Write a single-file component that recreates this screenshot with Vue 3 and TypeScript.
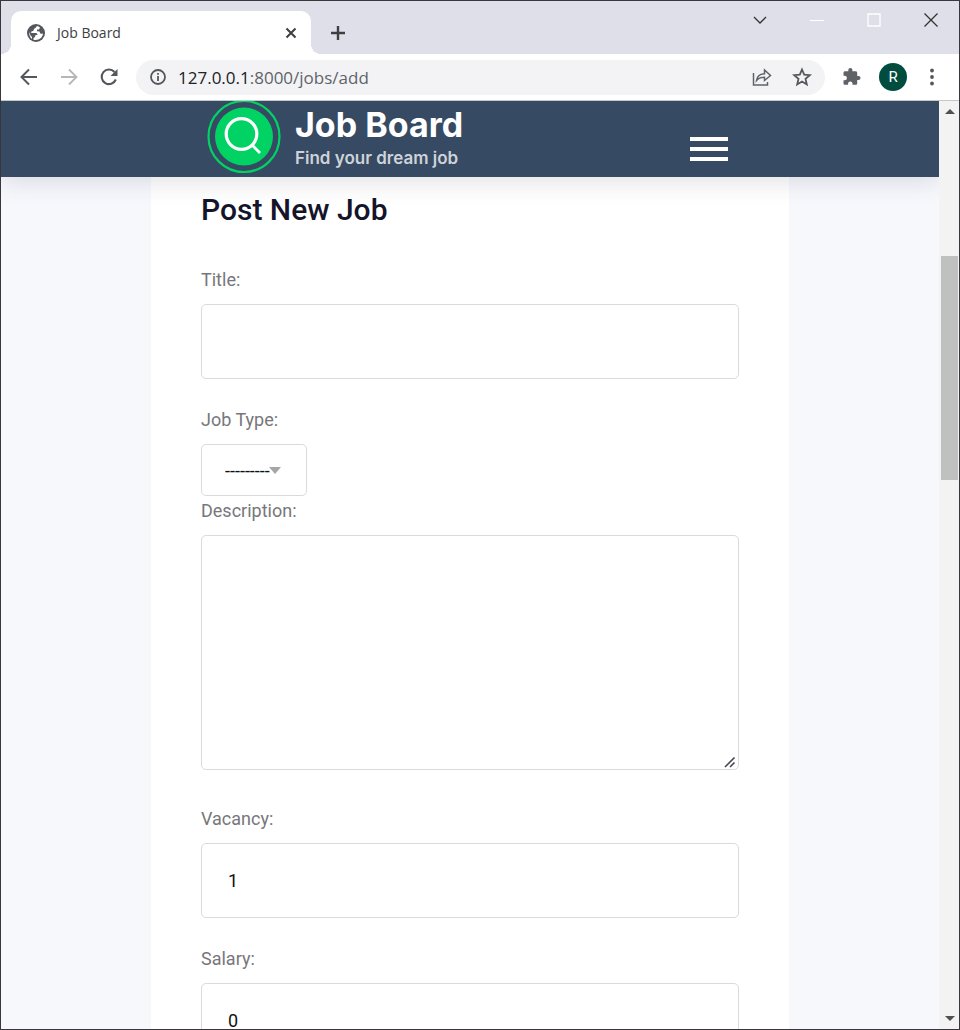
<script setup lang="ts">
import { ref } from 'vue'

const address = ref('127.0.0.1:8000/jobs/add')
const [host, path] = [address.value.split(':')[0], ':' + address.value.split(':')[1]]
const title = ref('')
const jobType = ref('')
const description = ref('')
const vacancy = ref('1')
const salary = ref('0')
</script>

<template>
  <div class="window">
    <div class="tabstrip">
      <div class="tab">
        <svg class="globe" viewBox="0 0 18 18" width="18" height="18">
          <circle cx="9" cy="9" r="9" fill="#54585d" />
          <path d="M10 2c-1 1-1 2-2.500 2.500C6.500 5 7 6.500 6 7c-1 .500-2 .500-2.500 1.500L5.500 9H9c1 0 1.500 1 1.500 2H8.500l-.500 2-1.500 1v1.800C12 17 16 13 16 9.500c-1 .500-2 .500-2.800-.300L12.500 7.500 10 7.300V5.500h2L13 3.500C12 2.500 11 2 10 2zM2.200 8C2 11 3 13.500 5 15v-2L3.500 11.500z" fill="#fff" />
        </svg>
        <span class="tab-title">Job Board</span>
        <button class="plain" aria-label="Close tab">
          <svg viewBox="0 0 12 12" width="12" height="12"><path d="M1.500 1.500l9 9M10.500 1.500l-9 9" stroke="#3c4043" stroke-width="2" /></svg>
        </button>
      </div>
      <button class="plain new-tab" aria-label="New tab">
        <svg viewBox="0 0 16 16" width="16" height="16"><path d="M8 1v14M1 8h14" stroke="#3c4043" stroke-width="2.400" /></svg>
      </button>
      <div class="window-buttons">
        <button class="plain" aria-label="Search tabs">
          <svg viewBox="0 0 14 14" width="14" height="14"><path d="M1 4l6 6 6-6" fill="none" stroke="#333" stroke-width="1.300" /></svg>
        </button>
        <button class="plain" aria-label="Minimize">
          <svg viewBox="0 0 14 14" width="14" height="14"><path d="M0 7.500h14" stroke="#fff" /></svg>
        </button>
        <button class="plain" aria-label="Maximize">
          <svg viewBox="0 0 14 14" width="14" height="14"><path d="M1 1h12v12H1z" fill="none" stroke="#fff" stroke-width="1.300" /></svg>
        </button>
        <button class="plain" aria-label="Close window">
          <svg viewBox="0 0 14 14" width="14" height="14"><path d="M.5.500l13 13M13.500.500l-13 13" stroke="#333" stroke-width="1.300" /></svg>
        </button>
      </div>
    </div>

    <div class="toolbar">
      <button class="plain nav" aria-label="Back">
        <svg viewBox="0 0 18 18" width="18" height="18"><path d="M17 9H2M9 1.500L1.500 9 9 16.500" fill="none" stroke="#54585d" stroke-width="2" /></svg>
      </button>
      <button class="plain nav" aria-label="Forward">
        <svg viewBox="0 0 18 18" width="18" height="18"><path d="M1 9h15M9 1.500L16.500 9 9 16.500" fill="none" stroke="#b4b6b8" stroke-width="1.800" /></svg>
      </button>
      <button class="plain nav" aria-label="Reload">
        <svg viewBox="0 0 18 18" width="18" height="18"><path d="M15.800 11.500A7.300 7.300 0 1 1 14.500 4" fill="none" stroke="#54585d" stroke-width="2.100" /><path d="M17.500 1v7h-7z" fill="#54585d" /></svg>
      </button>
      <div class="address">
        <svg viewBox="0 0 16 16" width="16" height="16"><circle cx="8" cy="8" r="7" fill="none" stroke="#54585d" stroke-width="1.800" /><path d="M8 7v5M8 4v1.800" stroke="#54585d" stroke-width="1.800" /></svg>
        <a class="url" href="#"><span class="host">{{ host }}</span>{{ path }}</a>
        <button class="plain" aria-label="Share">
          <svg viewBox="0 0 20 18" width="20" height="18"><path d="M1.500 5v12h14v-3M4.500 12.500c.500-4 3-6.500 8-6.800V2L18.500 7.500l-6 5V9.300c-3.500 0-6 .700-8 3.200z" fill="none" stroke="#5f6368" stroke-width="1.500" /></svg>
        </button>
        <button class="plain" aria-label="Bookmark">
          <svg viewBox="0 0 20 20" width="20" height="20"><path d="M10 2.500l2.200 5.200 5.600.500-4.300 3.700 1.300 5.500-4.800-2.900-4.800 2.900 1.300-5.500L2.200 8.200l5.600-.500z" fill="none" stroke="#54585d" stroke-width="1.800" /></svg>
        </button>
      </div>
      <button class="plain" aria-label="Extensions">
        <svg viewBox="0 0 20 20" width="20" height="20"><path d="M16.500 9H15.200V5.800c0-.900-.700-1.600-1.600-1.600h-3.200V3.100a2 2 0 0 0-4.100 0v1.100H3.100c-.900 0-1.600.700-1.600 1.600v3h1.200a2.200 2.200 0 0 1 0 4.400H1.500v3c0 .900.700 1.600 1.600 1.600h3v-1.200a2.200 2.200 0 0 1 4.400 0v1.200h3.100c.900 0 1.600-.700 1.600-1.600V13h1.300a2 2 0 0 0 0-4z" fill="#5f6368" /></svg>
      </button>
      <button class="avatar" aria-label="Profile">R</button>
      <button class="plain" aria-label="Menu">
        <svg viewBox="0 0 4 18" width="4" height="18"><g fill="#54585d"><circle cx="2" cy="2.500" r="1.900" /><circle cx="2" cy="9" r="1.900" /><circle cx="2" cy="15.500" r="1.900" /></g></svg>
      </button>
    </div>

    <div class="viewport">
      <div class="page">
        <header class="site-header">
          <div class="header-inner">
            <a class="brand" href="#">
              <svg viewBox="0 0 74 74" width="74" height="74">
                <circle cx="37" cy="36.500" r="35.500" fill="none" stroke="#00d363" stroke-width="2.200" />
                <circle cx="37" cy="36.500" r="29" fill="#00d363" />
                <circle cx="34.500" cy="34" r="15.300" fill="none" stroke="#fff" stroke-width="3.200" />
                <path d="M44.500 44.500l8.500 8.500" stroke="#fff" stroke-width="2.800" />
              </svg>
              <span class="brand-text">
                <span class="brand-name">Job Board</span>
                <span class="tagline">Find your dream job</span>
              </span>
            </a>
            <button class="burger" aria-label="Open navigation"><span></span><span></span><span></span></button>
          </div>
        </header>

        <main class="card">
          <h1>Post New Job</h1>
          <form @submit.prevent>
            <div class="field">
              <label for="title">Title:</label>
              <input id="title" v-model="title" type="text" />
            </div>
            <div class="field tight">
              <label for="type">Job Type:</label>
              <div class="select-wrap">
                <select id="type" v-model="jobType">
                  <option value="">---------</option>
                </select>
              </div>
            </div>
            <div class="field loose">
              <label for="description">Description:</label>
              <div class="area-wrap">
                <textarea id="description" v-model="description"></textarea>
                <svg class="grip" viewBox="0 0 12 12" width="12" height="12"><path d="M1 11L10.500 1.500M6 11l4.500-4.500" stroke="#4c4752" stroke-width="1.600" /></svg>
              </div>
            </div>
            <div class="field">
              <label for="vacancy">Vacancy:</label>
              <input id="vacancy" v-model="vacancy" type="text" />
            </div>
            <div class="field">
              <label for="salary">Salary:</label>
              <input id="salary" v-model="salary" type="text" />
            </div>
          </form>
        </main>
      </div>

      <div class="scrollbar">
        <svg viewBox="0 0 10 5" width="10" height="5"><path d="M0 5l5-5 5 5z" fill="#505050" /></svg>
        <div class="track"><div class="thumb"></div></div>
        <svg viewBox="0 0 10 5" width="10" height="5"><path d="M0 0l5 5 5-5z" fill="#505050" /></svg>
      </div>
    </div>
  </div>
</template>

<style>
body {
  margin: 0;
}
</style>

<style scoped>
* {
  box-sizing: border-box;
}
.window {
  height: 100vh;
  display: flex;
  flex-direction: column;
  overflow: hidden;
  border: 1px solid #39373d;
  background: #fff;
  font-family: Roboto, "Liberation Sans", sans-serif;
}
.plain {
  display: flex;
  flex: none;
  padding: 0;
  border: 0;
  background: none;
}
.tabstrip {
  flex: none;
  display: flex;
  height: 53px;
  padding: 10px 21px 0 10px;
  background: #dedfe9;
}
.tab {
  position: relative;
  display: flex;
  align-items: center;
  width: 300px;
  padding: 0 14px 0 16px;
  border-radius: 10px 10px 0 0;
  background: #fff;
}
.tab::before,
.tab::after {
  content: "";
  position: absolute;
  bottom: 0;
  width: 10px;
  height: 10px;
}
.tab::before {
  right: 100%;
  background: radial-gradient(circle at 0 0, transparent 10px, #fff 10px);
}
.tab::after {
  left: 100%;
  background: radial-gradient(circle at 100% 0, transparent 10px, #fff 10px);
}
.tab-title {
  flex: 1;
  padding-left: 12px;
  font: 14px "Open Sans", sans-serif;
  color: #3c4043;
}
.new-tab {
  align-self: center;
  margin-left: 19px;
}
.window-buttons {
  display: flex;
  gap: 43px;
  height: 18px;
  align-items: center;
  margin-left: auto;
}
.toolbar {
  flex: none;
  display: flex;
  align-items: center;
  height: 47px;
  padding: 0 25px 0 19px;
  border-bottom: 1px solid #c4c9c8;
}
.nav {
  margin-right: 22px;
}
.address {
  flex: 1;
  display: flex;
  align-items: center;
  height: 35px;
  margin: 0 17px 0 -4px;
  padding: 0 13px 0 14px;
  border-radius: 18px;
  background: #f3f3f6;
}
.address .plain {
  margin-left: 20px;
}
.url {
  flex: 1;
  padding-left: 12px;
  font: 17px "Open Sans", sans-serif;
  color: #5f6368;
  text-decoration: none;
}
.host {
  color: #202124;
}
.avatar {
  width: 28px;
  height: 28px;
  margin: 0 23px 0 17px;
  padding: 0;
  border: 0;
  border-radius: 50%;
  background: #004d40;
  color: #fff;
  font: 15px Roboto, sans-serif;
}
.viewport {
  flex: 1;
  min-height: 0;
  display: flex;
}
.page {
  flex: 1;
  overflow: hidden;
  background: #f7f8fc;
}
.site-header {
  position: relative;
  height: 76px;
  background: #364a63;
  box-shadow: 0 4px 24px rgba(60, 60, 80, 0.16);
}
.header-inner {
  display: flex;
  justify-content: space-between;
  max-width: 638px;
  margin: 0 auto;
  padding: 0 61px 0 56px;
}
.brand {
  display: flex;
  color: #fff;
  font-family: Inter, sans-serif;
  text-decoration: none;
}
.brand svg {
  margin-top: -1px;
}
.brand-text {
  display: flex;
  flex-direction: column;
  padding: 4px 0 0 14px;
  white-space: nowrap;
}
.brand-name {
  font-size: 34px;
  font-weight: 700;
  line-height: 40px;
}
.tagline {
  font-size: 17px;
  font-weight: 600;
  line-height: 26px;
  color: #ced3d9;
}
.burger {
  display: flex;
  flex-direction: column;
  gap: 6px;
  width: 38px;
  padding: 0;
  margin-top: 36px;
  border: 0;
  background: none;
}
.burger span {
  width: 38px;
  height: 4px;
  background: #fff;
}
.card {
  max-width: 638px;
  margin: 0 auto;
  padding: 15px 50px 50px;
  background: #fff;
}
h1 {
  margin: 0 0 38px;
  font-size: 30px;
  font-weight: 500;
  line-height: 36px;
  color: #14142b;
}
.field {
  margin-bottom: 27px;
}
.field.tight {
  margin-bottom: 1px;
}
.field.loose {
  margin-bottom: 35px;
}
label {
  display: block;
  margin-bottom: 10px;
  font-size: 18px;
  line-height: 28px;
  color: #77777b;
}
input,
textarea,
select {
  display: block;
  width: 100%;
  border: 1px solid #d8dadd;
  border-radius: 5px;
  background: #fff;
  color: #111;
  font: 18px Roboto, sans-serif;
  outline: none;
}
input {
  height: 75px;
  padding: 0 26px;
}
.area-wrap,
.select-wrap {
  position: relative;
}
textarea {
  height: 235px;
  padding: 20px 26px;
  resize: none;
}
.grip {
  position: absolute;
  right: 3px;
  bottom: 2px;
}
.select-wrap {
  width: 106px;
}
select {
  height: 52px;
  padding: 0 20px 0 23px;
  appearance: none;
}
.select-wrap::after {
  content: "";
  position: absolute;
  top: 23px;
  right: 26px;
  border: 6px solid transparent;
  border-top: 7px solid #a5a5aa;
  border-bottom: 0;
  pointer-events: none;
}
.scrollbar {
  flex: none;
  display: flex;
  flex-direction: column;
  align-items: center;
  width: 20px;
  padding: 8px 1px 8px 2px;
  background: #f4f3f4;
}
.track {
  flex: 1;
  align-self: stretch;
  padding-top: 142px;
}
.thumb {
  height: 29%;
  min-height: 224px;
  background: #bfc1c0;
}
</style>
